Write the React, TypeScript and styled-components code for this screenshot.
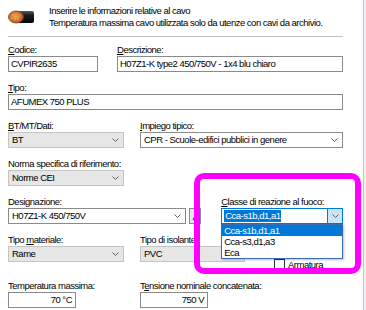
import React from "react";
import styled, { createGlobalStyle } from "styled-components";

const Global = createGlobalStyle`
  html, body { margin: 0; padding: 0; background: #ffffff; }
  body {
    font-family: "Liberation Sans", Arial, sans-serif;
    font-size: 9.5px;
    color: #000;
    letter-spacing: -0.5px;
  }
  * { box-sizing: border-box; }
`;

const Window = styled.div`
  position: relative;
  display: flex;
  width: 366px;
  height: 310px;
  overflow: hidden;
  background: #ffffff;
`;

const Main = styled.div`
  width: 363px;
  padding: 5px 20px 0 8px;
  display: flex;
  flex-direction: column;
`;

const Edge = styled.div`
  width: 1px;
  background: #c2c6cc;
`;

const Side = styled.div`
  flex: 1;
  background: #eef1f6;
`;

const Header = styled.div`
  display: flex;
  align-items: center;
  height: 24px;
`;

const HeaderText = styled.div`
  margin-left: 15px;
  line-height: 12px;
  white-space: nowrap;
`;

const Separator = styled.div`
  height: 1px;
  margin: 7px 0 7px;
  background: #c3c3c3;
`;

const Row = styled.div<{ $gap: number; $first?: boolean }>`
  display: flex;
  align-items: flex-start;
  gap: ${(p) => p.$gap}px;
  margin-top: ${(p) => (p.$first ? 0 : 10)}px;
`;

const Field = styled.div<{ $w: number }>`
  position: relative;
  width: ${(p) => p.$w}px;
  display: flex;
  flex-direction: column;
`;

const Label = styled.div`
  height: 12px;
  line-height: 12px;
  white-space: nowrap;
`;

const TextBox = styled.div<{ $right?: boolean }>`
  height: 16px;
  line-height: 14px;
  border: 1px solid #8a8a8a;
  background: #ffffff;
  padding: 0 ${(p) => (p.$right ? 3 : 2)}px;
  text-align: ${(p) => (p.$right ? "right" : "left")};
  white-space: nowrap;
  overflow: hidden;
`;

const Combo = styled.div<{ $gray?: boolean }>`
  height: 16px;
  display: flex;
  align-items: center;
  justify-content: space-between;
  border: 1px solid ${(p) => (p.$gray ? "#c4c4c4" : "#8a8a8a")};
  background: ${(p) => (p.$gray ? "#e6e6e6" : "#ffffff")};
  padding: 0 4px 0 3px;
  white-space: nowrap;
  overflow: hidden;
`;

const ComboText = styled.span`
  line-height: 14px;
`;

const SideButton = styled.div`
  width: 12px;
  height: 16px;
  margin-top: 12px;
  border: 1px solid #8a8a8a;
  background: #e6e6e6;
  display: flex;
  align-items: center;
  justify-content: center;
`;

const FocusCombo = styled.div`
  height: 16px;
  display: flex;
  align-items: center;
  border: 1px solid #0078d7;
  background: #ffffff;
`;

const Selected = styled.span`
  margin-left: 2px;
  padding: 0 1px;
  line-height: 12px;
  background: #0078d7;
  color: #ffffff;
`;

const DropButton = styled.div`
  margin-left: auto;
  width: 15px;
  height: 14px;
  display: flex;
  align-items: center;
  justify-content: center;
  background: #cce4f7;
  border-left: 1px solid #0078d7;
`;

const DropList = styled.div`
  position: absolute;
  top: 28px;
  left: 0;
  right: 0;
  z-index: 2;
  border: 1px solid #3a6db5;
  background: #ffffff;
  box-shadow: 1px 1px 2px rgba(0, 0, 0, 0.25);
`;

const Item = styled.div<{ $active?: boolean }>`
  height: 11px;
  line-height: 11px;
  padding-left: 2px;
  background: ${(p) => (p.$active ? "#0078d7" : "#ffffff")};
  color: ${(p) => (p.$active ? "#ffffff" : "#000000")};
`;

const CheckWrap = styled.div`
  display: flex;
  align-items: center;
  gap: 3px;
  padding-top: 25px;
  margin-left: 13px;
`;

const CheckBox = styled.div`
  width: 11px;
  height: 11px;
  border: 1px solid #333333;
  background: #ffffff;
`;

const Highlight = styled.div`
  position: absolute;
  left: 194px;
  top: 173px;
  width: 167px;
  height: 101px;
  border: 6px solid #ff00ff;
  border-radius: 10px;
  z-index: 3;
  pointer-events: none;
`;

const Chevron = () => (
  <svg width="7" height="4" viewBox="0 0 7 4" style={{ flex: "none" }}>
    <polyline points="0.5,0.5 3.5,3.5 6.5,0.5" fill="none" stroke="#606060" strokeWidth="1" />
  </svg>
);

const CableIcon = () => (
  <svg width="26" height="14" viewBox="0 0 26 14">
    <defs>
      <linearGradient id="sheath" x1="0" y1="0" x2="0" y2="1">
        <stop offset="0" stopColor="#5a5a5a" />
        <stop offset="0.35" stopColor="#1c1c1c" />
        <stop offset="1" stopColor="#050505" />
      </linearGradient>
      <radialGradient id="copper" cx="0.45" cy="0.45" r="0.6">
        <stop offset="0" stopColor="#f0a050" />
        <stop offset="1" stopColor="#b8541a" />
      </radialGradient>
    </defs>
    <rect x="10" y="1" width="16" height="12" rx="2" fill="url(#sheath)" />
    <ellipse cx="8" cy="7" rx="7.5" ry="6" fill="url(#copper)" stroke="#7a3a10" strokeWidth="0.8" />
    <g fill="#e9c070">
      <circle cx="5" cy="5" r="0.8" />
      <circle cx="8" cy="4" r="0.8" />
      <circle cx="11" cy="6" r="0.8" />
      <circle cx="4" cy="8" r="0.8" />
      <circle cx="7" cy="9" r="0.8" />
      <circle cx="10" cy="9" r="0.8" />
      <circle cx="8" cy="6.8" r="0.8" />
    </g>
  </svg>
);

const EditIcon = () => (
  <svg width="7" height="9" viewBox="0 0 7 9">
    <path d="M1 8 L1.5 6 L5.5 1 L6.5 2 L2.5 7 Z" fill="#6b8e4e" stroke="#333" strokeWidth="0.6" />
  </svg>
);

export default function App() {
  return (
    <>
      <Global />
      <Window>
        <Main>
          <Header>
            <CableIcon />
            <HeaderText>
              <div>Inserire le informazioni relative al cavo</div>
              <div>Temperatura massima cavo utilizzata solo da utenze con cavi da archivio.</div>
            </HeaderText>
          </Header>
          <Separator />

          <Row $gap={19} $first>
            <Field $w={90}>
              <Label><u>C</u>odice:</Label>
              <TextBox>CVPIR2635</TextBox>
            </Field>
            <Field $w={226}>
              <Label><u>D</u>escrizione:</Label>
              <TextBox>H07Z1-K type2 450/750V - 1x4 blu chiaro</TextBox>
            </Field>
          </Row>

          <Row $gap={0}>
            <Field $w={335}>
              <Label><u>T</u>ipo:</Label>
              <TextBox>AFUMEX 750 PLUS</TextBox>
            </Field>
          </Row>

          <Row $gap={16}>
            <Field $w={116}>
              <Label><u>B</u>T/MT/Dati:</Label>
              <Combo $gray>
                <ComboText>BT</ComboText>
                <Chevron />
              </Combo>
            </Field>
            <Field $w={203}>
              <Label><u>I</u>mpiego tipico:</Label>
              <Combo>
                <ComboText>CPR - Scuole-edifici pubblici in genere</ComboText>
                <Chevron />
              </Combo>
            </Field>
          </Row>

          <Row $gap={0}>
            <Field $w={116}>
              <Label>Norma specifica di riferimento:</Label>
              <Combo $gray>
                <ComboText>Norme CEI</ComboText>
                <Chevron />
              </Combo>
            </Field>
          </Row>

          <Row $gap={3}>
            <Field $w={180}>
              <Label>Desi<u>g</u>nazione:</Label>
              <Combo>
                <ComboText>H07Z1-K 450/750V</ComboText>
                <Chevron />
              </Combo>
            </Field>
            <SideButton>
              <EditIcon />
            </SideButton>
            <Field $w={123} style={{ marginLeft: 17 }}>
              <Label><u>C</u>lasse di reazione al fuoco:</Label>
              <FocusCombo>
                <Selected>Cca-s1b,d1,a1</Selected>
                <DropButton>
                  <Chevron />
                </DropButton>
              </FocusCombo>
              <DropList>
                <Item $active>Cca-s1b,d1,a1</Item>
                <Item>Cca-s3,d1,a3</Item>
                <Item>Eca</Item>
              </DropList>
            </Field>
          </Row>

          <Row $gap={16}>
            <Field $w={116}>
              <Label>Tipo <u>m</u>ateriale:</Label>
              <Combo $gray>
                <ComboText>Rame</ComboText>
                <Chevron />
              </Combo>
            </Field>
            <Field $w={105}>
              <Label>Tipo di isolante:</Label>
              <Combo $gray>
                <ComboText>PVC</ComboText>
                <Chevron />
              </Combo>
            </Field>
            <CheckWrap>
              <CheckBox />
              <span>Armatura</span>
            </CheckWrap>
          </Row>

          <Row $gap={64}>
            <Field $w={68}>
              <Label>Temperatura massima:</Label>
              <TextBox $right>70 °C</TextBox>
            </Field>
            <Field $w={68}>
              <Label>T<u>e</u>nsione nominale concatenata:</Label>
              <TextBox $right>750 V</TextBox>
            </Field>
          </Row>
        </Main>
        <Edge />
        <Side />
        <Highlight />
      </Window>
    </>
  );
}
